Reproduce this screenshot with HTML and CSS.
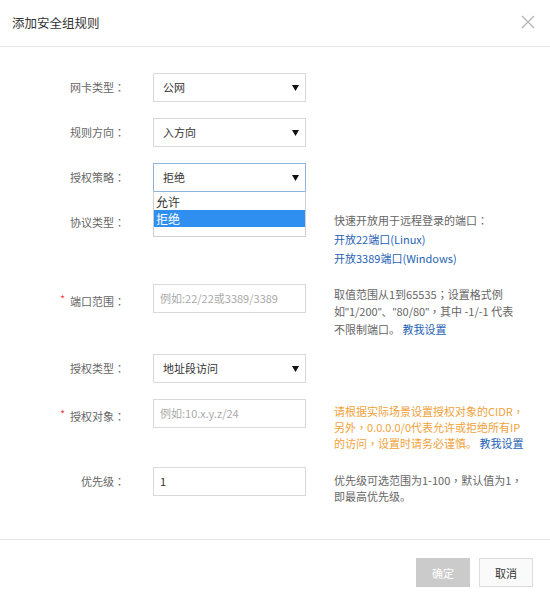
FILE: index.html
```html
<!DOCTYPE html>
<html lang="zh-CN">
<head>
<meta charset="utf-8">
<title>添加安全组规则</title>
<link rel="stylesheet" href="styles.css">
</head>
<body>
<div class="dialog">
  <div class="header">
    <div class="title">添加安全组规则</div>
    <svg class="close" width="14" height="14" viewBox="0 0 14 14"><path d="M1 1L13 13M13 1L1 13" stroke="#b5b5b5" stroke-width="1.3" fill="none"/></svg>
  </div>
  <div class="form">
    <div class="row">
      <div class="label">网卡类型<span class="p" lang="zh-TW">：</span></div>
      <div class="control select"><span>公网</span><svg class="arrow" width="7" height="6" viewBox="0 0 7 6"><polygon points="0,0 7,0 3.5,6" fill="#111"/></svg></div>
    </div>
    <div class="row">
      <div class="label">规则方向<span class="p" lang="zh-TW">：</span></div>
      <div class="control select"><span>入方向</span><svg class="arrow" width="7" height="6" viewBox="0 0 7 6"><polygon points="0,0 7,0 3.5,6" fill="#111"/></svg></div>
    </div>
    <div class="row">
      <div class="label">授权策略<span class="p" lang="zh-TW">：</span></div>
      <div class="control select focused"><span>拒绝</span><svg class="arrow" width="7" height="6" viewBox="0 0 7 6"><polygon points="0,0 7,0 3.5,6" fill="#111"/></svg>
        <ul class="options">
          <li>允许</li>
          <li class="active">拒绝</li>
        </ul>
      </div>
    </div>
    <div class="row">
      <div class="label">协议类型<span class="p" lang="zh-TW">：</span></div>
      <div class="control select"></div>
      <div class="help help-tall">快速开放用于远程登录的端口<span class="p" lang="zh-TW">：</span><br><a class="link">开放22端口(Linux)</a><br><a class="link">开放3389端口(Windows)</a></div>
    </div>
    <div class="row">
      <div class="label"><span class="req">*</span>端口范围<span class="p" lang="zh-TW">：</span></div>
      <div class="control input placeholder">例如:22/22或3389/3389</div>
      <div class="help">取值范围从1到65535<span class="p" lang="zh-TW">；</span>设置格式例<br>如<span class="q">"</span>1/200<span class="q">"</span>、<span class="q">"</span>80/80<span class="q">"</span><span class="p" lang="zh-TW">，</span>其中 -1/-1 代表<br>不限制端口。 <a class="link">教我设置</a></div>
    </div>
    <div class="row">
      <div class="label">授权类型<span class="p" lang="zh-TW">：</span></div>
      <div class="control select"><span>地址段访问</span><svg class="arrow" width="7" height="6" viewBox="0 0 7 6"><polygon points="0,0 7,0 3.5,6" fill="#111"/></svg></div>
    </div>
    <div class="row">
      <div class="label"><span class="req">*</span>授权对象<span class="p" lang="zh-TW">：</span></div>
      <div class="control input placeholder">例如:10.x.y.z/24</div>
      <div class="help help-warn">请根据实际场景设置授权对象的CIDR<span class="p" lang="zh-TW">，</span><br>另外<span class="p" lang="zh-TW">，</span>0.0.0.0/0代表允许或拒绝所有IP<br>的访问<span class="p" lang="zh-TW">，</span>设置时请务必谨慎。 <a class="link">教我设置</a></div>
    </div>
    <div class="row">
      <div class="label">优先级<span class="p" lang="zh-TW">：</span></div>
      <div class="control input">1</div>
      <div class="help help-low">优先级可选范围为1-100<span class="p" lang="zh-TW">，</span>默认值为1<span class="p" lang="zh-TW">，</span><br>即最高优先级。</div>
    </div>
  </div>
  <div class="footer">
    <button class="btn btn-ok">确定</button>
    <button class="btn btn-cancel">取消</button>
  </div>
</div>
</body>
</html>
```
FILE: styles.css
```css
* { box-sizing: border-box; }
html, body { margin: 0; padding: 0; background: #fff; }
body {
  font-family: "Noto Sans CJK SC", "Noto Sans", sans-serif;
  font-size: 11px;
  color: #333;
}
.p { font-family: "Noto Sans CJK TC", "Noto Sans CJK SC", sans-serif; }
.q { font-family: "Liberation Sans", sans-serif; }
.dialog {
  width: 550px;
  height: 605px;
  display: flex;
  flex-direction: column;
  background: #fff;
}
.header {
  height: 47px;
  flex-shrink: 0;
  display: flex;
  align-items: center;
  justify-content: space-between;
  padding: 0 15px 2px 12px;
  border-bottom: 1px solid #e6e6e6;
}
.title { font-size: 12.5px; color: #333; }
.close { display: block; }
.form {
  flex: 1;
  padding-top: 26px;
  display: flex;
  flex-direction: column;
  gap: 16px;
}
.row {
  display: flex;
  align-items: flex-start;
}
.label {
  width: 125px;
  flex-shrink: 0;
  text-align: right;
  line-height: 29px;
  color: #666;
}
.req {
  color: #e33;
  font-size: 10px;
  vertical-align: 3px;
  margin-right: 5px;
}
.control {
  position: relative;
  margin-left: 28px;
  width: 153px;
  height: 29px;
  flex-shrink: 0;
  border: 1px solid #d9d9d9;
  background: #fff;
  padding: 0 6px;
  line-height: 27px;
  color: #333;
}
.select {
  display: flex;
  align-items: center;
  justify-content: space-between;
  padding: 0 6px 0 9px;
}
.focused { border-color: #8fb4de; }
.placeholder { color: #aaa; }
.options {
  position: absolute;
  z-index: 2;
  left: -1px;
  top: 27px;
  width: 153px;
  height: 46px;
  margin: 0;
  padding: 1px 0 0 0;
  list-style: none;
  background: #fff;
  border: 1px solid #cfcfcf;
  border-top-color: #8fb4de;
}
.options li {
  height: 17px;
  line-height: 17px;
  padding-left: 2px;
  font-size: 12px;
  color: #333;
}
.options li.active {
  background: #2f8ff0;
  color: #fff;
}
.help {
  margin-left: 28px;
  margin-top: 2px;
  line-height: 17px;
  color: #666;
  white-space: nowrap;
}
.help-tall { line-height: 19px; margin-top: 3px; }
.help-warn { color: #f0a23a; line-height: 16px; margin-top: 4px; }
.help-low { line-height: 16px; margin-top: 5px; }
.link { color: #1f63b5; text-decoration: none; }
.footer {
  height: 66px;
  flex-shrink: 0;
  border-top: 1px solid #e6e6e6;
  display: flex;
  justify-content: flex-end;
  align-items: flex-start;
  gap: 9px;
  padding: 18px 17px 0 0;
}
.btn {
  width: 54px;
  height: 29px;
  font-family: inherit;
  font-size: 11px;
  padding: 0;
}
.btn-ok {
  background: #cbcbcb;
  border: 1px solid #cbcbcb;
  color: #fff;
}
.btn-cancel {
  background: #fafafa;
  border: 1px solid #dcdcdc;
  color: #333;
}
```
